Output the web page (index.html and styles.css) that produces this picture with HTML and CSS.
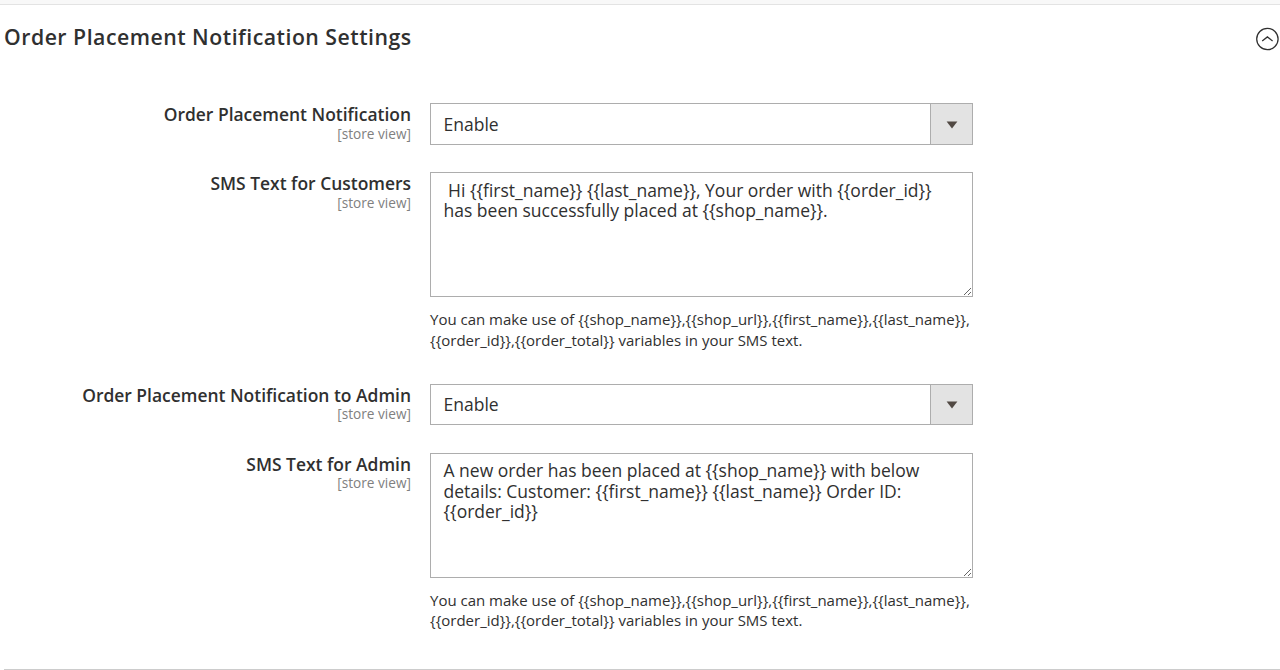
FILE: index.html
```html
<!DOCTYPE html>
<html lang="en">
<head>
<meta charset="utf-8">
<title>Order Placement Notification Settings</title>
<link rel="stylesheet" href="styles.css">
</head>
<body>
<main class="section">
  <header class="section-head">
    <h1 class="title">Order Placement Notification Settings</h1>
    <svg class="toggle" viewBox="0 0 24 24" width="24" height="24"><circle cx="12.4" cy="12" r="10.7"/><path d="M7.2 14 12.4 9.9l5.2 4.1"/></svg>
  </header>
  <div class="fields">
  <div class="field">
    <div class="label"><span class="name">Order Placement Notification</span><span class="scope">[store view]</span></div>
    <div class="select"><span class="value">Enable</span><span class="arrow"><svg width="12" height="8" viewBox="0 0 12 8"><path d="M.6.5h10.8L6 7.5z"/></svg></span></div>
  </div>
  <div class="field field-text">
    <div class="label"><span class="name">SMS Text for Customers</span><span class="scope">[store view]</span></div>
    <div class="control"><textarea class="area"> Hi {{first_name}} {{last_name}}, Your order with {{order_id}} has been successfully placed at {{shop_name}}.</textarea>
    <p class="note">You can make use of {{shop_name}},{{shop_url}},{{first_name}},{{last_name}},<br>{{order_id}},{{order_total}} variables in your SMS text.</p></div>
  </div>
  <div class="field">
    <div class="label"><span class="name">Order Placement Notification to Admin</span><span class="scope">[store view]</span></div>
    <div class="select"><span class="value">Enable</span><span class="arrow"><svg width="12" height="8" viewBox="0 0 12 8"><path d="M.6.5h10.8L6 7.5z"/></svg></span></div>
  </div>
  <div class="field field-text">
    <div class="label"><span class="name">SMS Text for Admin</span><span class="scope">[store view]</span></div>
    <div class="control"><textarea class="area">A new order has been placed at {{shop_name}} with below details: Customer: {{first_name}} {{last_name}} Order ID: {{order_id}}</textarea>
    <p class="note">You can make use of {{shop_name}},{{shop_url}},{{first_name}},{{last_name}},<br>{{order_id}},{{order_total}} variables in your SMS text.</p></div>
  </div>
  </div>
</main>
</body>
</html>
```
FILE: styles.css
```css
* { box-sizing: border-box; }
body { margin: 0; height: 670px; overflow: hidden; background: #fff; color: #303030; font-family: "Open Sans", sans-serif; border-top: 4px solid #f8f8f8; }
.section { display: flex; flex-direction: column; height: 666px; border-top: 1px solid #e3e3e3; }
.section-head { display: flex; flex: none; justify-content: space-between; height: 98.3px; padding: 15px 1px 0 4px; }
.title { margin: 0; font-size: 21.25px; line-height: 33px; font-weight: 600; letter-spacing: .5px; }
.toggle { margin-top: 7px; fill: none; stroke: #303030; stroke-width: 1.25; }
.fields { flex: 1; margin-left: 4px; border-bottom: 1px solid #ccc; }
.field { display: grid; grid-template-columns: 407px 543px; column-gap: 19px; height: 68.75px; }
.field-text { height: 211.8px; }
.label { display: flex; flex-direction: column; text-align: right; }
.name { font-size: 17.45px; line-height: 23px; font-weight: 600; }
.scope { margin-top: -1.5px; font-size: 13.65px; line-height: 18px; color: #808080; }
.select { display: flex; height: 41.25px; border: 1px solid #adadad; }
.value { flex: 1; padding: .3px 0 0 12.5px; font-size: 17.5px; line-height: 39.8px; }
.arrow { display: flex; align-items: center; justify-content: center; width: 42px; padding-top: 2px; background: #e3e3e3; border-left: 1px solid #adadad; fill: #514943; }
.area { display: block; width: 543px; height: 125px; margin: 0; padding: 6.7px 12.5px; border: 1px solid #adadad; color: #303030; background: #fff; font: 17.5px/20.4px "Open Sans", sans-serif; resize: vertical; }
.note { margin: 12.2px 0 0; font-size: 15px; line-height: 20.4px; }
```
